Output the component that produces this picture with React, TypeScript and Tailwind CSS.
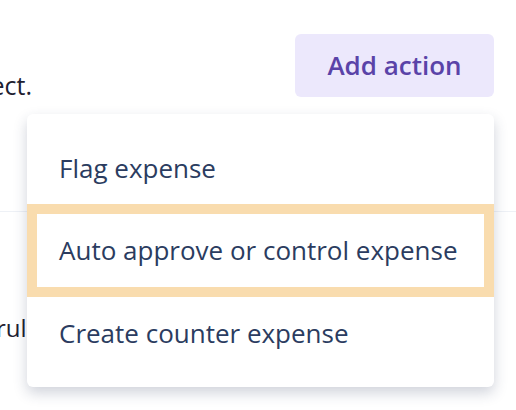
import React from 'react';

const actions = ['Flag expense', 'Auto approve or control expense', 'Create counter expense'];

function App() {
  const highlighted = 1;

  return (
    <div className="relative w-[516px] h-[410px] overflow-hidden bg-white font-['Open_Sans',sans-serif]">
      <div className="pt-[34px]">
        {/* header row: description text + button */}
        <div className="flex h-[63px] items-start">
          <div className="flex w-[32px] justify-end pt-[37px]">
            <p className="whitespace-nowrap text-[25px] leading-[29px] text-[#1d2030]">
              Choose which action this rule should take effect.
            </p>
          </div>
          <button className="ml-auto mr-[22px] h-[63px] w-[199px] rounded-md bg-[#ece8fc] text-[26px] font-semibold text-[#5a43a8]">
            Add action
          </button>
        </div>

        <div className="mt-[114px] border-t border-[#eef1f6]" />

        <div className="mt-[101px] ml-[-4px] flex w-[31px] justify-start">
          <p className="whitespace-nowrap text-[24px] leading-[29px] text-[#1d2030]">rule applies when</p>
        </div>
      </div>

      {/* dropdown menu */}
      <div className="absolute left-[27px] top-[114px] w-[467px] rounded-md bg-white py-[18px] shadow-[0_6px_14px_rgba(40,55,90,0.22)]">
        {actions.map((label, i) => (
          <div
            key={label}
            className={
              i === highlighted
                ? 'flex h-[93px] items-center border-[10px] border-[#f9dcae] pl-[22px] text-[26px] text-[#2b3c60]'
                : 'flex h-[72px] items-center pl-[32px] text-[26px] text-[#2b3c60]'
            }
          >
            {label}
          </div>
        ))}
      </div>
    </div>
  );
}

export default App;
